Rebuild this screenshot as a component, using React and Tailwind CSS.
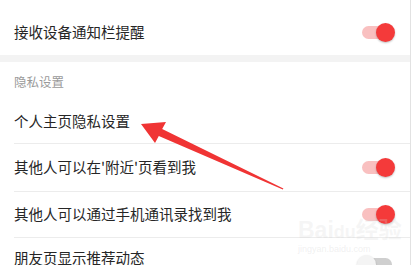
import React from "react";

function Toggle({ on }) {
  if (on) {
    return (
      <div className="relative w-[33px] h-[19px] shrink-0">
        <div className="absolute left-0 top-[3px] w-[28px] h-[13px] rounded-full bg-[#f9c0c0]" />
        <div className="absolute right-0 top-0 w-[19px] h-[19px] rounded-full bg-[#f43a3a] shadow-[0_1px_2px_rgba(0,0,0,0.25)]" />
      </div>
    );
  }
  return (
    <div className="relative w-[33px] h-[19px] shrink-0 mt-[12px]">
      <div className="absolute left-0 top-[3px] w-[30px] h-[13px] rounded-full bg-[#cfcfcf]" />
      <div className="absolute left-[-5px] top-0 w-[19px] h-[19px] rounded-full bg-[#f4f4f4] shadow-[0_1px_2px_rgba(0,0,0,0.2)]" />
    </div>
  );
}

function Row({ label, toggle, h, border = true }) {
  return (
    <div
      className={`ml-[14px] flex items-center justify-between pr-[15px] ${border ? "border-t border-[#ececec]" : ""}`}
      style={{ height: h }}
    >
      <span className="text-[14.5px] text-[#262626] leading-none">{label}</span>
      {toggle}
    </div>
  );
}

export default function App() {
  return (
    <div className="relative w-[416px] h-[265px] overflow-hidden bg-white font-['Noto_Sans_CJK_SC','Noto_Sans',sans-serif]">
      <div className="w-[411px] h-full border-r border-[#e2e2e2]">
        <div className="h-[55px] pt-[9px] pl-[14px] pr-[15px] flex items-center justify-between">
          <span className="text-[14.5px] text-[#262626] leading-none">接收设备通知栏提醒</span>
          <Toggle on />
        </div>
        <div className="h-[7px] bg-[#f3f3f3]" />
        <div className="h-[38px] pt-[2px] pl-[14px] flex items-center">
          <span className="text-[12.5px] text-[#9a9a9a] leading-none">隐私设置</span>
        </div>
        <Row label="个人主页隐私设置" h={43} border={false} />
        <Row label="其他人可以在'附近'页看到我" h={48} toggle={<Toggle on />} />
        <Row label="其他人可以通过手机通讯录找到我" h={46} toggle={<Toggle on />} />
        <Row label="朋友页显示推荐动态" h={41} toggle={<Toggle on={false} />} />
      </div>

      <div className="absolute left-[298px] top-[219px] pointer-events-none select-none">
        <div className="text-[23px] font-bold leading-none text-[rgba(215,215,215,0.25)] font-['Liberation_Sans','Noto_Sans_CJK_SC',sans-serif]">
          Bai<span className="text-[18px]">du</span>经验
        </div>
        <div className="mt-[3px] text-[9px] leading-none text-[rgba(205,205,205,0.3)] font-['Liberation_Sans',sans-serif]">
          jingyan.baidu.com
        </div>
      </div>

      <svg className="absolute left-0 top-0 pointer-events-none" width="416" height="265" viewBox="0 0 416 265">
        <polygon
          points="141,124 166,122 162.2,128.9 283.4,188.4 282.8,189.6 158.8,136.1 155,143"
          fill="#f03434"
        />
      </svg>
    </div>
  );
}
